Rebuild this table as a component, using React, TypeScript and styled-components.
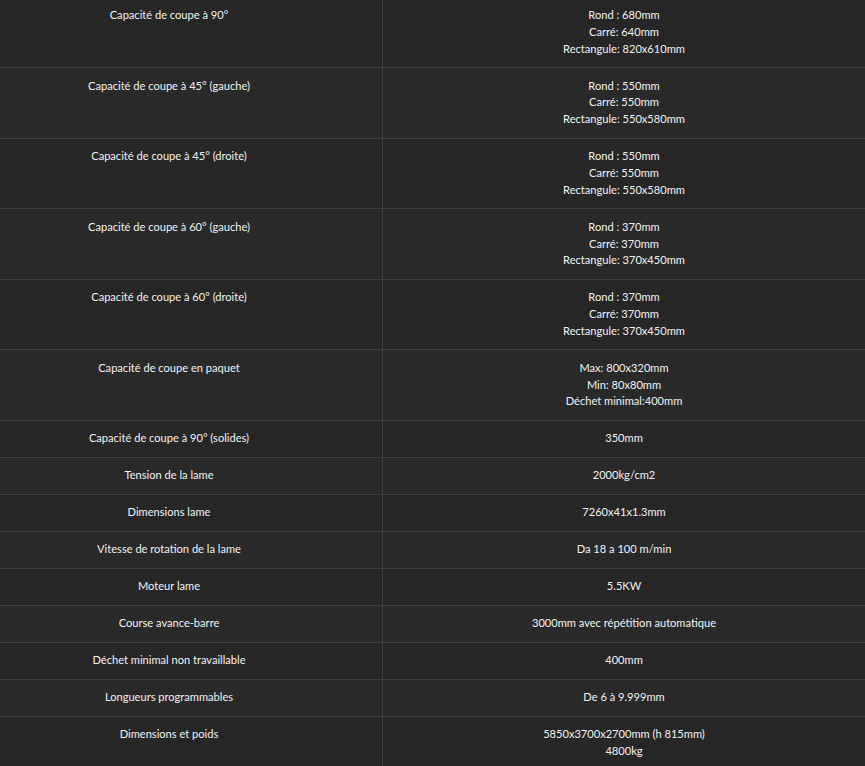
import React from "react";
import styled, { createGlobalStyle } from "styled-components";

const GlobalStyle = createGlobalStyle`
  html, body {
    margin: 0;
    padding: 0;
    background: #262626;
    overflow: hidden;
  }
  body {
    font-family: Lato, "Open Sans", sans-serif;
    font-size: 11px;
    color: #ededed;
  }
`;

const Table = styled.div`
  display: grid;
  grid-template-columns: 383px 1fr;
  width: 865px;
  margin-top: -2.6px;
`;

const Cell = styled.div<{ $alt: boolean; $label?: boolean }>`
  background: ${(p) => (p.$alt ? "#292929" : "#262626")};
  border-bottom: 1px solid #3e3e3e;
  border-right: ${(p) => (p.$label ? "1px solid #3e3e3e" : "none")};
  padding: ${(p) => (p.$label ? "9.6px 52px 9.6px 8px" : "9.6px 8px")};
  line-height: 16.8px;
  text-align: center;
  font-size: 11.1px;
  color: #f2f2f2;
`;

const Line = styled.div`
  white-space: nowrap;
`;

const rows: [string, string[]][] = [
  ["Capacité de coupe à 90°", ["Rond : 680mm", "Carré: 640mm", "Rectangule: 820x610mm"]],
  ["Capacité de coupe à 45° (gauche)", ["Rond : 550mm", "Carré: 550mm", "Rectangule: 550x580mm"]],
  ["Capacité de coupe à 45° (droite)", ["Rond : 550mm", "Carré: 550mm", "Rectangule: 550x580mm"]],
  ["Capacité de coupe à 60° (gauche)", ["Rond : 370mm", "Carré: 370mm", "Rectangule: 370x450mm"]],
  ["Capacité de coupe à 60° (droite)", ["Rond : 370mm", "Carré: 370mm", "Rectangule: 370x450mm"]],
  ["Capacité de coupe en paquet", ["Max: 800x320mm", "Min: 80x80mm", "Déchet minimal:400mm"]],
  ["Capacité de coupe à 90° (solides)", ["350mm"]],
  ["Tension de la lame", ["2000kg/cm2"]],
  ["Dimensions lame", ["7260x41x1.3mm"]],
  ["Vitesse de rotation de la lame", ["Da 18 a 100 m/min"]],
  ["Moteur lame", ["5.5KW"]],
  ["Course avance-barre", ["3000mm avec répétition automatique"]],
  ["Déchet minimal non travaillable", ["400mm"]],
  ["Longueurs programmables", ["De 6 à 9.999mm"]],
  ["Dimensions et poids", ["5850x3700x2700mm (h 815mm)", "4800kg"]],
];

export default function App() {
  return (
    <>
      <GlobalStyle />
      <Table>
        {rows.map(([label, values], i) => (
          <React.Fragment key={label + i}>
            <Cell $alt={i % 2 === 1} $label>
              <Line>{label}</Line>
            </Cell>
            <Cell $alt={i % 2 === 1}>
              {values.map((v) => (
                <Line key={v}>{v}</Line>
              ))}
            </Cell>
          </React.Fragment>
        ))}
      </Table>
    </>
  );
}
